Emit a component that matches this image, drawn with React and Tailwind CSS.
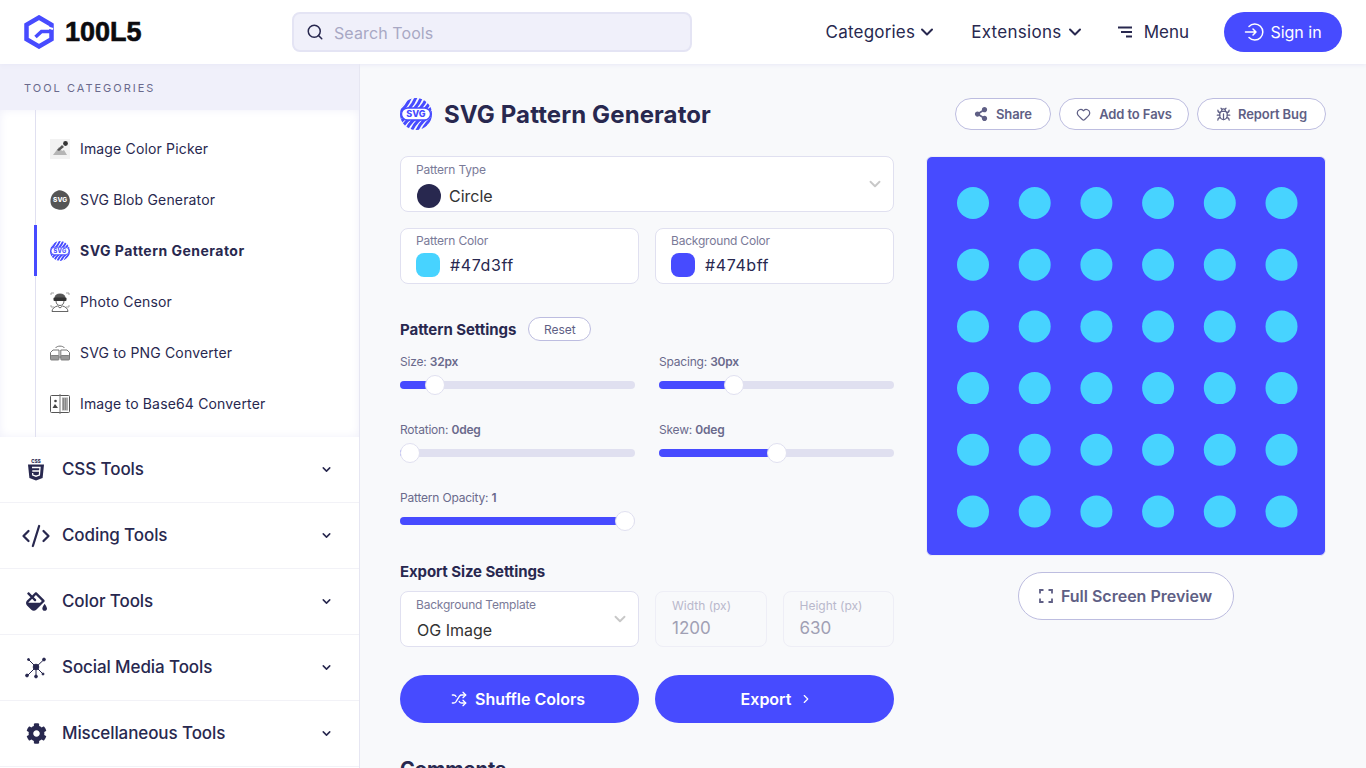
import React from 'react';
import { Search, ChevronDown, ChevronRight, CodeXml, Heart, Bug, Shuffle } from 'lucide-react';
import { FaCog, FaFillDrip, FaShareAlt } from 'react-icons/fa';

function LogoMark() {
  return (
    <svg width="30" height="34" viewBox="0 0 30 34" fill="none">
      <path d="M15 2.500 27.500 9.700v14.600L15 31.500 2.500 24.300V9.700Z" stroke="#474bff" strokeWidth="4.500" />
      <path d="M24 12.500 29 14" stroke="#fff" strokeWidth="2" />
      <path d="M27 16.500H17.500L11.500 22" stroke="#474bff" strokeWidth="3.600" />
    </svg>
  );
}

const stripes = [-34, -28.500, -23, -17.500, -12, -6.500, -1, 4.500, 10, 15.500, 21, 26.500];

function PatternIcon({ size, id }) {
  return (
    <svg width={size} height={size} viewBox="0 0 32 32">
      <defs>
        <clipPath id={id}><circle cx="16" cy="16" r="16" /></clipPath>
      </defs>
      <g clipPath={`url(#${id})`} fill="none" stroke="#474bff" strokeWidth="3">
        {stripes.map((o) => (
          <path key={o} d={`M${o} 36Q${o + 5} 22 ${o + 17} 17T${o + 34} -2`} />
        ))}
      </g>
      <rect x="1.500" y="10" width="29" height="12" rx="6" fill="#fff" stroke="#474bff" strokeWidth="1.400" />
      <text x="16" y="19.400" textAnchor="middle" fontSize="9" fontWeight="800" fill="#474bff" fontFamily="Inter, sans-serif">SVG</text>
    </svg>
  );
}

function PickerIcon() {
  return (
    <svg width="20" height="20" viewBox="0 0 20 20">
      <rect width="20" height="20" fill="#f2f2f2" />
      <path d="M3 16 9 8l3 4 2-1 3 5Z" fill="#b5b5b5" />
      <path d="M7 11 12 6l2 2-5 4Z" fill="#555" />
      <circle cx="15.500" cy="4.500" r="2.400" fill="#333" />
    </svg>
  );
}

function BlobIcon() {
  return (
    <svg width="20" height="20" viewBox="0 0 20 20">
      <path d="M8 .6C12-.6 19 3 19.800 9.500 20.300 15 16 20 11 19.800 6 19.600 1 18 .5 12 .2 7 3 2 8 .6Z" fill="#555" />
      <text x="10.200" y="12.400" textAnchor="middle" fontSize="6.500" fontWeight="800" fill="#fff" fontFamily="Inter, sans-serif">SVG</text>
    </svg>
  );
}

function CensorIcon() {
  return (
    <svg width="20" height="20" viewBox="0 0 20 20" fill="none" stroke="#555" strokeWidth="0.900">
      <path d="M1 3V1h3M16 1h3v2M1 13v2h3M16 15h3v-2" stroke="#999" />
      <path d="M5 6c0-3 2-4 5-4s5 1 5 4" fill="#555" />
      <rect x="3.500" y="5.500" width="13" height="3.500" rx="1" fill="#333" stroke="none" />
      <path d="M6 9c0 3 2 4.500 4 4.500s4-1.500 4-4.500" />
      <path d="M2 19.500c0-3 3-5 5.500-5.500l2.500 2 2.500-2c2.500.5 5.500 2.500 5.500 5.500Z" />
    </svg>
  );
}

function ConvertIcon() {
  return (
    <svg width="20" height="20" viewBox="0 0 20 20" fill="none" stroke="#666" strokeWidth="0.900">
      <path d="M5.500 5C7 2.500 13 2.500 14.500 5" />
      <path d="M.5 15V9.500L3 7h6v8M10.800 15V7H17l2.500 2.500V15" />
      <rect x="0.500" y="12.500" width="8.500" height="4.500" rx="0.800" fill="#999" stroke="#777" />
      <rect x="10.800" y="12.500" width="8.700" height="4.500" rx="0.800" fill="#999" stroke="#777" />
    </svg>
  );
}

function Base64Icon() {
  return (
    <svg width="20" height="20" viewBox="0 0 20 20" fill="none">
      <rect x="0.500" y="1.500" width="19" height="17" rx="1" stroke="#555" />
      <path d="M10 0v20" stroke="#777" />
      <circle cx="5.500" cy="7" r="1.300" fill="#444" />
      <path d="M2.500 14 5 10l3 4Z" fill="#444" />
      <rect x="12" y="3.500" width="6" height="13" fill="#aaa" />
      <path d="M13 5h4M13 7h4M13 9h4M13 11h4M13 13h4M13 15h4" stroke="#666" strokeDasharray="1 1" />
    </svg>
  );
}

function CssIcon() {
  return (
    <svg width="18" height="22" viewBox="0 0 18 22">
      <text x="9" y="4" textAnchor="middle" fontSize="4.500" fontWeight="800" fill="#28284f" fontFamily="Inter, sans-serif">CSS</text>
      <path d="M1 5.500h16L15.600 19 9 21.500 2.400 19Z" fill="#28284f" />
      <path d="M5 8.500h8l-.6 7.500L9 17.200 5.800 16l-.2-2M5.300 12h7.300" fill="none" stroke="#fff" strokeWidth="1.300" />
    </svg>
  );
}

function SocialIcon() {
  return (
    <svg width="22" height="22" viewBox="0 0 22 22" fill="#28284f" stroke="#28284f">
      <path d="M11 10 4 3M11 10l7.500-7M11 10l-8 8M11 10v8.500M11 10l7 7" strokeWidth="1" />
      <circle cx="11" cy="10" r="2.800" />
      <circle cx="3.500" cy="2.500" r="1" />
      <circle cx="19" cy="2.500" r="1.400" />
      <circle cx="2" cy="18.500" r="1.400" />
      <circle cx="11" cy="19.500" r="1.400" />
      <circle cx="18" cy="17" r="1" />
    </svg>
  );
}

function MenuLines() {
  return (
    <svg width="16" height="14" viewBox="0 0 16 14" stroke="#28284f" strokeWidth="1.800">
      <path d="M1 2.500h14M4 7h11M9 11.500h6" />
    </svg>
  );
}

function SignInIcon() {
  return (
    <svg width="20" height="20" viewBox="0 0 20 20" fill="none" stroke="#fff" strokeWidth="1.500" strokeLinecap="round" strokeLinejoin="round">
      <path d="M5 4.500A8 8 0 1 1 5 15.500" />
      <path d="M1.500 10H12M9 7l3 3-3 3" />
    </svg>
  );
}

function CornersIcon() {
  return (
    <svg width="14" height="14" viewBox="0 0 14 14" fill="none" stroke="#5f5f85" strokeWidth="1.800">
      <path d="M1 4.500V1h3.500M9.500 1H13v3.500M13 9.500V13H9.500M4.500 13H1V9.500" />
    </svg>
  );
}

function Slider({ label, value, left }) {
  return (
    <div>
      <p className="h-4 text-xs leading-4 tracking-[-0.2px] text-[#6a6a8c]">
        {label}: <span className="font-semibold">{value}</span>
      </p>
      <div className="relative mt-[11px] h-2 rounded-full bg-[#e0e0f0]">
        <div className="h-2 rounded-full bg-[#474bff]" style={{ width: left + 10 }} />
        <div
          className="absolute top-[-6px] h-5 w-5 rounded-full border border-[#e0e0f0] bg-white"
          style={{ left }}
        />
      </div>
    </div>
  );
}

function Field({ label, children, className = '' }) {
  return (
    <div className={`relative h-14 rounded-lg border border-[#e0e0f0] bg-white px-[15px] ${className}`}>
      <p className="text-xs leading-[18px] tracking-[-0.2px] text-[#7a7a98]">{label}</p>
      {children}
    </div>
  );
}

const tools = [
  { name: 'Image Color Picker', icon: <PickerIcon /> },
  { name: 'SVG Blob Generator', icon: <BlobIcon /> },
  { name: 'SVG Pattern Generator', icon: <PatternIcon size={20} id="side-pattern" />, active: true },
  { name: 'Photo Censor', icon: <CensorIcon /> },
  { name: 'SVG to PNG Converter', icon: <ConvertIcon /> },
  { name: 'Image to Base64 Converter', icon: <Base64Icon /> },
];

const categories = [
  { name: 'CSS Tools', icon: <CssIcon /> },
  { name: 'Coding Tools', icon: <CodeXml size={30} strokeWidth={1.800} color="#28284f" /> },
  { name: 'Color Tools', icon: <FaFillDrip size={21} color="#28284f" /> },
  { name: 'Social Media Tools', icon: <SocialIcon /> },
  { name: 'Miscellaneous Tools', icon: <FaCog size={21} color="#28284f" /> },
];

const dots = [0, 1, 2, 3, 4, 5];

export default function App() {
  return (
    <div className="flex h-screen flex-col overflow-hidden bg-[#f8f9fb] font-['Inter',sans-serif] text-[#28284f]">
      <header className="z-10 flex h-16 shrink-0 items-center bg-white pl-6 pr-6 shadow-[0_1px_4px_#e8e8f6]">
        <div className="flex w-[268px] items-center gap-[11px]">
          <LogoMark />
          <span className="font-['Liberation_Sans',sans-serif] text-[27px] font-bold leading-none text-[#0b0b0f] [-webkit-text-stroke:0.6px_#0b0b0f]">100L5</span>
        </div>
        <div className="flex h-10 w-[400px] items-center gap-[10px] rounded-lg border-2 border-[#e4e4f4] bg-[#f0f0fa] pl-3">
          <Search size={18} strokeWidth={2} color="#28284f" />
          <span className="mt-[2px] text-base tracking-[0.1px] text-[#a8a8c4]">Search Tools</span>
        </div>
        <nav className="ml-auto flex items-center">
          <span className="mt-[2px] text-[17px] tracking-[0.2px]">Categories</span>
          <ChevronDown size={20} strokeWidth={2.400} className="ml-0.5" />
          <span className="mt-[2px] ml-[34px] text-[17px] tracking-[0.3px]">Extensions</span>
          <ChevronDown size={20} strokeWidth={2.400} className="ml-[3px]" />
          <span className="ml-[32px]"><MenuLines /></span>
          <span className="mt-[2px] ml-[11px] text-[17px]">Menu</span>
          <button className="ml-[35px] flex h-10 w-[118px] items-center justify-center gap-[6px] rounded-full bg-[#474bff] text-base text-white">
            <SignInIcon />
            Sign in
          </button>
        </nav>
      </header>

      <div className="flex min-h-0 flex-1">
        <aside className="w-[360px] shrink-0 overflow-hidden border-r border-[#e6e6f2] bg-white">
          <div className="flex h-[46px] items-center bg-[#f0f0fa] pl-6 pt-[2px] text-[11px] tracking-[2px] text-[#6a6a8c]">
            TOOL CATEGORIES
          </div>
          <div className="bg-white pl-[35px] shadow-[inset_0_0_10px_#f0f0fa]">
            <ul className="h-[327px] border-l border-[#e0e0f0] py-[13px]">
              {tools.map((tool) => (
                <li
                  key={tool.name}
                  className={`relative flex h-[51px] items-center gap-2.5 pl-[14px] text-sm ${tool.active ? 'font-bold tracking-[0.48px]' : 'tracking-[0.16px]'}`}
                >
                  {tool.active && <span className="absolute left-[-2px] top-0 h-full w-[3px] bg-[#474bff]" />}
                  {tool.icon}
                  {tool.name}
                </li>
              ))}
            </ul>
          </div>
          {categories.map((cat) => (
            <div key={cat.name} className="flex h-[66px] items-center border-b border-[#f2f2f7] pr-[26px]">
              <span className="flex w-[72px] justify-center">{cat.icon}</span>
              <span className="ml-[-10px] text-[17px] font-medium tracking-[-0.1px]">{cat.name}</span>
              <ChevronDown size={13} strokeWidth={2.800} className="ml-auto" />
            </div>
          ))}
        </aside>

        <main className="min-w-0 flex-1 overflow-hidden px-10 pt-[34px]">
          <div className="flex h-8 items-center">
            <PatternIcon size={32} id="title-pattern" />
            <h1 className="ml-3 mt-[2px] text-2xl font-bold tracking-[0.1px]">SVG Pattern Generator</h1>
            <div className="ml-auto flex gap-2 text-[13px] font-semibold tracking-[-0.1px] text-[#5f5f85]">
              <button className="flex h-8 w-24 items-center justify-center gap-2 rounded-full border border-[#bdbde0] bg-white">
                <FaShareAlt size={14} />
                <span className="mt-[2px]">Share</span>
              </button>
              <button className="flex h-8 w-[130px] items-center justify-center gap-2 rounded-full border border-[#bdbde0] bg-white">
                <Heart size={15} />
                <span className="mt-[2px]">Add to Favs</span>
              </button>
              <button className="flex h-8 w-[129px] items-center justify-center gap-[7px] rounded-full border border-[#bdbde0] bg-white">
                <Bug size={15} />
                <span className="mt-[2px]">Report Bug</span>
              </button>
            </div>
          </div>

          <div className="mt-[26px] flex gap-8">
            <div className="w-[494px] shrink-0">
              <Field label="Pattern Type" className="pt-1">
                <div className="mt-[5px] flex items-center gap-2 pl-px">
                  <span className="h-6 w-6 rounded-full bg-[#28284f]" />
                  <span className="text-base text-[#333]">Circle</span>
                </div>
                <ChevronDown size={18} color="#c8c8c8" strokeWidth={2.500} className="absolute right-[9px] top-[18px]" />
              </Field>
              <div className="mt-4 grid grid-cols-2 gap-4">
                <Field label="Pattern Color" className="pt-[3px]">
                  <div className="mt-[3px] flex items-center gap-2.5">
                    <span className="h-6 w-6 rounded-lg bg-[#47d3ff]" />
                    <span className="text-base tracking-[0.6px]">#47d3ff</span>
                  </div>
                </Field>
                <Field label="Background Color" className="pt-[3px]">
                  <div className="mt-[3px] flex items-center gap-2.5">
                    <span className="h-6 w-6 rounded-lg bg-[#474bff]" />
                    <span className="text-base tracking-[0.6px]">#474bff</span>
                  </div>
                </Field>
              </div>

              <div className="mt-[33px] flex h-6 items-center gap-3">
                <h2 className="mt-[2px] text-[15px] font-bold tracking-[-0.05px]">Pattern Settings</h2>
                <button className="h-6 w-[63px] rounded-full border border-[#bdbde0] bg-white pt-px text-xs text-[#5f5f85]">
                  Reset
                </button>
              </div>
              <div className="mt-[13px] grid grid-cols-2 gap-x-6 gap-y-[33px]">
                <Slider label="Size" value="32px" left={25} />
                <Slider label="Spacing" value="30px" left={65} />
                <Slider label="Rotation" value="0deg" left={0} />
                <Slider label="Skew" value="0deg" left={108} />
                <Slider label="Pattern Opacity" value="1" left={215} />
              </div>

              <h2 className="mt-[37px] text-[15px] font-bold leading-5 tracking-[-0.1px]">Export Size Settings</h2>
              <div className="mt-[9px] flex gap-4">
                <Field label="Background Template" className="w-[239px] shrink-0 pt-1">
                  <p className="mt-1 pl-px text-base leading-6 text-[#333]">OG Image</p>
                  <ChevronDown size={18} color="#c8c8c8" strokeWidth={2.500} className="absolute right-[9px] top-[18px]" />
                </Field>
                <div className="h-14 flex-1 rounded-lg border border-[#eeeef6] px-4 pt-[5px]">
                  <p className="text-xs leading-[18px] text-[#b8b8cc]">Width (px)</p>
                  <p className="mt-px text-[17px] leading-6 text-[#a0a0b4]">1200</p>
                </div>
                <div className="h-14 flex-1 rounded-lg border border-[#eeeef6] px-4 pt-[5px]">
                  <p className="text-xs leading-[18px] text-[#b8b8cc]">Height (px)</p>
                  <p className="mt-px text-[17px] leading-6 text-[#a0a0b4]">630</p>
                </div>
              </div>

              <div className="mt-7 grid grid-cols-2 gap-4">
                <button className="flex h-12 items-center justify-center gap-2 rounded-full bg-[#474bff] pr-[3px] text-base font-semibold text-white">
                  <Shuffle size={16} />
                  Shuffle Colors
                </button>
                <button className="flex h-12 items-center justify-center gap-2 rounded-full bg-[#474bff] pl-[5px] text-base font-semibold text-white">
                  Export
                  <ChevronRight size={14} />
                </button>
              </div>

              <h2 className="mt-8 text-xl font-bold leading-7">Comments</h2>
            </div>

            <div className="flex w-[400px] shrink-0 flex-col items-center">
              <div className="h-[400px] w-[400px] overflow-hidden rounded-md border border-[#f0f0f6] bg-[#474bff]">
                <svg width="398" height="398" viewBox="0 0 398 398">
                  {dots.map((row) =>
                    dots.map((col) => (
                      <circle key={`${row}-${col}`} cx={46 + col * 61.7} cy={46 + row * 61.7} r="16" fill="#47d3ff" />
                    ))
                  )}
                </svg>
              </div>
              <button className="mt-4 flex h-12 w-[216px] items-center justify-center gap-2 rounded-full border border-[#bdbde0] bg-white pr-px text-base font-semibold text-[#5f5f85]">
                <CornersIcon />
                Full Screen Preview
              </button>
            </div>
          </div>
        </main>
      </div>
    </div>
  );
}
